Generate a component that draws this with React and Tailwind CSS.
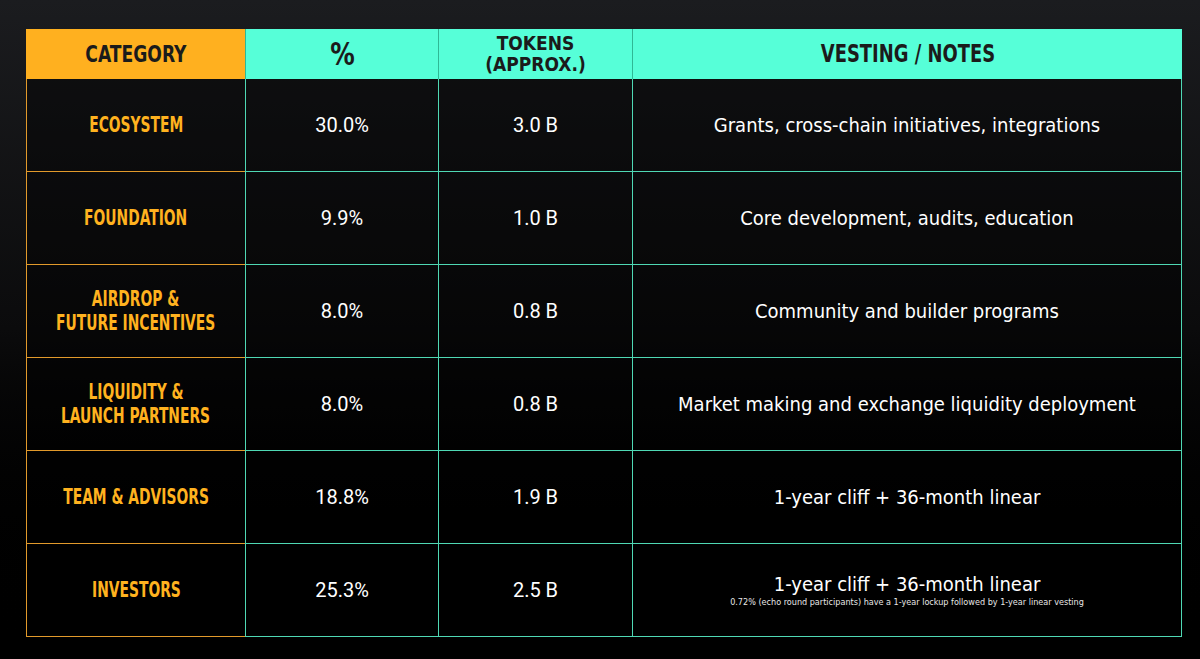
const display = "font-['Liberation_Sans_Narrow','DejaVu_Sans_Condensed',sans-serif] font-bold uppercase";
const narrow = "font-['Liberation_Sans_Narrow','DejaVu_Sans_Condensed',sans-serif]";
const roboto = "font-['Roboto','Liberation_Sans',sans-serif]";

const rows = [
  { cat: ["Ecosystem"], pct: "30.0%", tokens: "3.0 B", note: "Grants, cross-chain initiatives, integrations" },
  { cat: ["Foundation"], pct: "9.9%", tokens: "1.0 B", note: "Core development, audits, education" },
  { cat: ["Airdrop &", "Future Incentives"], pct: "8.0%", tokens: "0.8 B", note: "Community and builder programs" },
  { cat: ["Liquidity &", "Launch Partners"], pct: "8.0%", tokens: "0.8 B", note: "Market making and exchange liquidity deployment" },
  { cat: ["Team & Advisors"], pct: "18.8%", tokens: "1.9 B", note: "1-year cliff + 36-month linear" },
  {
    cat: ["Investors"],
    pct: "25.3%",
    tokens: "2.5 B",
    note: "1-year cliff + 36-month linear",
    sub: "0.72% (echo round participants) have a 1-year lockup followed by 1-year linear vesting",
  },
];

const tealCell = "border-l border-b border-[#4fd8b4] bg-black/40 flex items-center justify-center text-white";
const tealHead = `bg-[#56ffd8] text-[#1b1b1b] border-l border-[#2fb895] flex flex-col items-center justify-center ${display}`;

export default function App() {
  return (
    <div className="w-[1200px] h-[659px] overflow-hidden bg-gradient-to-b from-[#1b1c1f] via-[#0b0b0c] to-black pt-[29px] pl-[26px]">
      <div className="grid grid-cols-[219px_193px_194px_550px] grid-rows-[50px_repeat(6,93px)] w-[1156px]">
        {/* header */}
        <div className={`bg-[#ffb01f] text-[#1b1b1b] flex items-center justify-center text-[23px] ${display}`}>
          <span className="inline-block whitespace-nowrap scale-x-[0.83]">Category</span>
        </div>
        <div className={`${tealHead} text-[32px]`}>
          <span className="inline-block scale-x-[0.85]">%</span>
        </div>
        <div className={`${tealHead} text-[19px] leading-[21px]`}>
          <span className="inline-block whitespace-nowrap">Tokens</span>
          <span className="inline-block whitespace-nowrap">(Approx.)</span>
        </div>
        <div className={`${tealHead} text-[24px]`}>
          <span className="inline-block whitespace-nowrap scale-x-[0.83]">Vesting / Notes</span>
        </div>

        {rows.map((r) => (
          <div key={r.pct + r.note + r.cat[0]} className="contents">
            <div className={`border-l border-b border-[#e29a2b] bg-black/40 flex flex-col items-center justify-center text-[#ffb21f] text-[22px] leading-[24px] ${display}`}>
              {r.cat.map((c) => (
                <span key={c} className="inline-block whitespace-nowrap scale-x-[0.7]">
                  {c}
                </span>
              ))}
            </div>
            <div className={`${tealCell} text-[20px] ${roboto}`}>{r.pct}</div>
            <div className={`${tealCell} text-[20px] ${roboto}`}>{r.tokens}</div>
            <div className={`${tealCell} border-r flex-col ${narrow}`}>
              <span className="text-[20px] leading-[24px]">{r.note}</span>
              {r.sub && <span className="text-[9px] leading-[12px] text-[#e6e6e6]">{r.sub}</span>}
            </div>
          </div>
        ))}
      </div>
    </div>
  );
}
